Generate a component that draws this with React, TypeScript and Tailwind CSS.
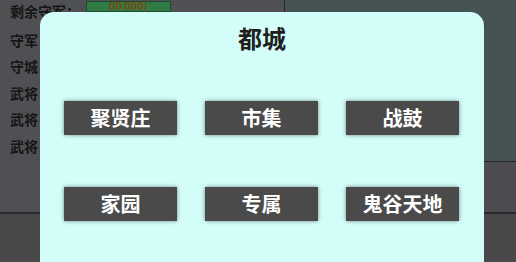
import React from "react";

const FONT = { fontFamily: '"Noto Sans CJK SC", "Noto Sans", sans-serif' };

const LABELS = ["守军", "守城", "武将", "武将", "武将"];
const BUTTONS = ["聚贤庄", "市集", "战鼓", "家园", "专属", "鬼谷天地"];

function Backdrop() {
  return (
    <div className="flex h-full w-full flex-col">
      <div className="flex h-[212px]">
        {/* left info panel */}
        <div className="w-[285px] border-r border-[#2e2626] bg-[#4f5053] pl-[10px] pt-[1px]">
          <div className="flex h-[20px] items-center">
            <span className="text-[14px] font-bold text-[#151515]">剩余守军：</span>
            <div className="ml-[6px] -mt-[9px] flex h-[11px] w-[85px] items-end justify-center border border-[#1f4a2a] bg-[#2f7a45]">
              <span className="text-[11px] font-bold leading-[11px] text-[#7a4a12]">00 000/</span>
            </div>
          </div>
          <div className="mt-[6px] flex flex-col">
            {LABELS.map((l, i) => (
              <div key={i} className="flex h-[26.5px] items-center text-[14px] font-bold text-[#151515]">
                {l}
              </div>
            ))}
          </div>
        </div>
        {/* right panel */}
        <div className="flex flex-1 flex-col">
          <div className="h-[161px] bg-[#455352]" />
          <div className="flex-1 border-t border-[#262626] bg-[#4c4b50]" />
        </div>
      </div>
      <div className="flex-1 border-t-2 border-[#2a2a2c] bg-[#49484a]" />
    </div>
  );
}

export default function App() {
  return (
    <div className="relative h-[262px] w-[516px] overflow-hidden" style={FONT}>
      <Backdrop />

      {/* modal */}
      <div className="absolute left-[40px] top-[12px] h-[280px] w-[444px] rounded-[14px] bg-[#d3fdf9] px-[24px]">
        <h2 className="mt-[12px] text-center text-[24px] font-bold leading-[28px] text-[#1e1e1e]">都城</h2>
        <div className="mt-[49px] grid grid-cols-[113px_113px_113px] gap-x-[28px] gap-y-[52px]">
          {BUTTONS.map((b) => (
            <button
              key={b}
              className="flex h-[34px] items-center justify-center bg-[#4a4a4a] text-[20px] font-bold text-white shadow-[0_0_4px_rgba(0,0,0,0.45)]"
            >
              {b}
            </button>
          ))}
        </div>
      </div>
    </div>
  );
}
